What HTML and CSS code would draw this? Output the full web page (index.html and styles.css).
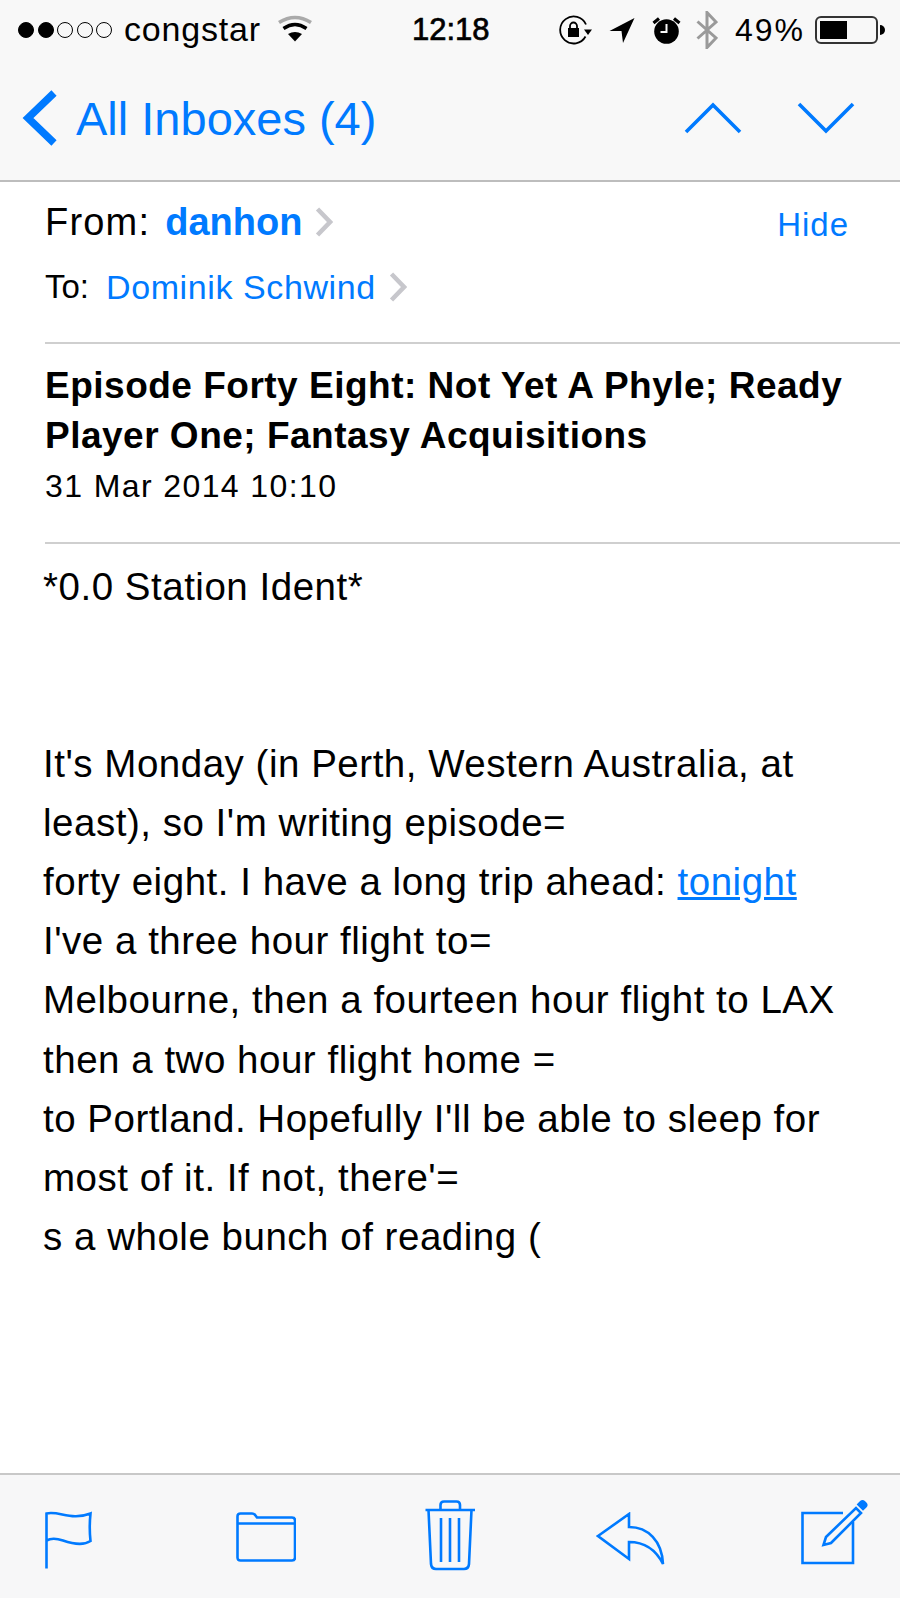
FILE: index.html
```html
<!DOCTYPE html>
<html lang="en">
<head>
<meta charset="utf-8">
<title>Mail</title>
<link rel="stylesheet" href="styles.css">
</head>
<body>
<div class="phone">
  <header class="top">
    <div class="status">
      <div class="status-left">
        <div class="dots"><i class="dot on"></i><i class="dot on"></i><i class="dot"></i><i class="dot"></i><i class="dot"></i></div>
        <span class="carrier">congstar</span>
        <svg class="wifi" width="34" height="27" viewBox="0 0 34 27">
          <path d="M1 7.500Q17 -2.500 33 7.500" fill="none" stroke="#aaa" stroke-width="3.600"/>
          <path d="M5.500 13.500Q17 5.500 28.500 13.500" fill="none" stroke="#000" stroke-width="3.400"/>
          <path d="M10 19Q17 15 24 19L17 26.500Z" fill="#000"/>
        </svg>
      </div>
      <div class="time">12:18</div>
      <div class="status-right">
        <svg class="st-lock" width="33" height="30" viewBox="0 0 33 30">
          <path d="M27 9.500A13.500 13.500 0 1 0 26.500 21.500" fill="none" stroke="#000" stroke-width="1.800"/>
          <path d="M25 14.500H33L29 20Z" fill="#000"/>
          <rect x="9" y="13" width="11" height="9" fill="#000"/>
          <path d="M11 13V11A3.500 3.500 0 0 1 18 11V13" fill="none" stroke="#000" stroke-width="1.800"/>
        </svg>
        <svg class="st-loc" width="26" height="26" viewBox="0 0 26 26"><path d="M25.500 1L0.500 14H12.500L14 26Z" fill="#000"/></svg>
        <svg class="st-alarm" width="29" height="27" viewBox="0 0 29 27">
          <circle cx="14.500" cy="14.500" r="12.300" fill="#000"/>
          <path d="M14.500 7V15H8.500" fill="none" stroke="#f8f8f8" stroke-width="2"/>
          <path d="M1.500 6L7 1.500M27.500 6L22 1.500" fill="none" stroke="#000" stroke-width="3.200"/>
        </svg>
        <svg class="st-bt" width="22" height="38" viewBox="0 0 22 38">
          <path d="M1.500 10.500L20 27L11 36.500V1.500L20 11L1.500 27.500" fill="none" stroke="#9a9a9a" stroke-width="3"/>
        </svg>
        <span class="pct">49%</span>
        <div class="battery"><div class="battery-fill"></div></div>
        <i class="battery-nub"></i>
      </div>
    </div>
    <nav class="nav">
      <div class="back">
        <svg class="back-icon" width="38" height="60" viewBox="0 0 38 60"><path d="M34 5L8 30L34 55" fill="none" stroke="#007aff" stroke-width="7.500"/></svg>
        <span>All Inboxes (4)</span>
      </div>
      <div class="arrows">
        <svg width="58" height="32" viewBox="0 0 58 32"><path d="M2 30L29 3L56 30" fill="none" stroke="#007aff" stroke-width="3.600"/></svg>
        <svg width="58" height="32" viewBox="0 0 58 32"><path d="M2 2L29 29L56 2" fill="none" stroke="#007aff" stroke-width="3.600"/></svg>
      </div>
    </nav>
  </header>

  <main class="mail">
    <section class="addr">
      <div class="from-row">
        <div class="from">
          <span class="label">From:</span>
          <strong class="sender">danhon</strong>
          <svg class="disc" width="18" height="30" viewBox="0 0 18 30"><path d="M2.500 2L15 15L2.500 28" fill="none" stroke="#c7c7cc" stroke-width="4.500"/></svg>
        </div>
        <a class="hide">Hide</a>
      </div>
      <div class="to">
        <span class="label-small">To:</span>
        <span class="recipient">Dominik Schwind</span>
        <svg class="disc" width="18" height="30" viewBox="0 0 18 30"><path d="M2.500 2L15 15L2.500 28" fill="none" stroke="#c7c7cc" stroke-width="4.500"/></svg>
      </div>
    </section>
    <section class="subject">
      <h1>Episode Forty Eight: Not Yet A Phyle; Ready Player One; Fantasy Acquisitions</h1>
      <div class="date">31 Mar 2014 10:10</div>
    </section>
    <article class="body">
      <p class="ident">*0.0 Station Ident*</p>
      <p>It's Monday (in Perth, Western Australia, at<br>least), so I'm writing episode=<br>forty eight. I have a long trip ahead: <a class="link">tonight</a><br>I've a three hour flight to=<br>Melbourne, then a fourteen hour flight to LAX<br>then a two hour flight home =<br>to Portland. Hopefully I'll be able to sleep for<br>most of it. If not, there'=<br>s a whole bunch of reading (</p>
    </article>
  </main>

  <footer class="tools">
    <svg class="t-flag" width="48" height="58" viewBox="0 0 48 58" fill="none" stroke="#007aff" stroke-width="2.600">
      <path d="M1.500 57.500V2.500C14 -0.500 26 10 45.500 2.500C44.500 12 44.500 21 45.500 30C38 35 28 33 18 29.500C12 27.500 6 27 1.500 29.500"/>
    </svg>
    <svg class="t-folder" width="60" height="50" viewBox="0 0 60 50" fill="none" stroke="#007aff" stroke-width="2.600">
      <path d="M1.500 4.500Q1.500 1.500 4.500 1.500H16Q18 1.500 19.500 3.500L21 5.500H56Q59 5.500 59 8.500V45.500Q59 48.500 56 48.500H4.500Q1.500 48.500 1.500 45.500Z"/>
      <path d="M1.500 11.500H59"/>
    </svg>
    <svg class="t-trash" width="52" height="72" viewBox="0 0 52 72" fill="none" stroke="#007aff" stroke-width="2.600">
      <path d="M0.500 11H50M3.500 11L6 65Q6.500 70 11 70H39Q43.500 70 44 65L46.500 11"/>
      <path d="M15.500 11V6Q15.500 2.500 19 2.500H31.500Q35 2.500 35 6V11"/>
      <path d="M16 19V63M25 19V63M34 19V63"/>
    </svg>
    <svg class="t-reply" width="70" height="54" viewBox="0 0 70 54" fill="none" stroke="#007aff" stroke-width="2.600">
      <path d="M2 24L33 2V15C52 15 66 29 67 52C60 38 50 30 33 30V47Z"/>
    </svg>
    <svg class="t-compose" width="68" height="68" viewBox="0 0 68 68" fill="none" stroke="#007aff" stroke-width="2.600">
      <path d="M43 14H2.500V64H53V23"/>
      <path d="M26 38L56 9L61 14L31 44L23.500 46Z"/>
      <path d="M58.500 5.500L61 3Q62.500 1.500 64 3L65.500 4.500Q67 6 65.500 7.500L63 10Z" fill="#007aff"/>
    </svg>
  </footer>
</div>
</body>
</html>
```
FILE: styles.css
```css
* { box-sizing: border-box; }
html, body { margin: 0; padding: 0; }
body { width: 900px; height: 1598px; overflow: hidden; background: #fff; font-family: "Liberation Sans", Arial, sans-serif; color: #000; }
.phone { width: 900px; height: 1598px; display: flex; flex-direction: column; }

.top { height: 182px; flex: none; background: #f8f8f8; border-bottom: 2px solid #bdbdbd; }
.status { height: 60px; display: flex; align-items: center; padding: 0 15px 0 18px; }
.status-left { display: flex; align-items: center; flex: 0 0 394px; }
.dots { display: flex; gap: 3.500px; }
.dot { width: 16px; height: 16px; border-radius: 50%; border: 1.500px solid #000; display: block; }
.dot.on { background: #000; }
.carrier { font-size: 34px; letter-spacing: 0.800px; margin-left: 12px; margin-top: -1px; }
.wifi { margin-left: 17px; margin-top: -3px; }
.time { font-size: 31px; -webkit-text-stroke: 0.700px #000; }
.status-right { display: flex; align-items: center; margin-left: auto; }
.st-lock { margin-right: 17px; }
.st-loc { margin-right: 17px; }
.st-alarm { margin-right: 15px; }
.st-bt { margin-right: 17px; }
.pct { font-size: 32px; letter-spacing: 2px; margin-right: 10px; }
.battery { width: 63px; height: 28px; border: 2px solid #333; border-radius: 6px; padding: 3px; }
.battery-fill { width: 27px; height: 100%; background: #000; }
.battery-nub { display: block; width: 5px; height: 10px; background: #000; border-radius: 0 5px 5px 0; margin-left: 2px; }

.nav { height: 120px; display: flex; align-items: center; justify-content: space-between; padding: 0 45px 4px 20px; }
.back { display: flex; align-items: center; color: #007aff; font-size: 47px; }
.back-icon { margin-right: 18px; }
.arrows { display: flex; gap: 55px; }

.mail { flex: 1; min-height: 0; }
.addr { margin-left: 45px; height: 162px; border-bottom: 2px solid #cfcfcf; }
.from-row { display: flex; justify-content: space-between; align-items: center; height: 80px; padding-right: 51px; }
.from { display: flex; align-items: center; }
.label { font-size: 38px; letter-spacing: 1.200px; }
.sender { font-size: 38px; color: #007aff; margin-left: 15px; margin-right: 13px; }
.hide { font-size: 33px; letter-spacing: 1px; color: #007aff; margin-top: 6px; }
.to { display: flex; align-items: center; height: 44px; margin-top: 3px; }
.label-small { font-size: 33px; }
.recipient { font-size: 34px; letter-spacing: 0.600px; color: #007aff; margin-left: 17px; margin-right: 13px; }

.subject { margin-left: 45px; height: 200px; padding-top: 17px; border-bottom: 2px solid #cfcfcf; }
.subject h1 { margin: 0; font-size: 37px; font-weight: 700; letter-spacing: 0.500px; line-height: 50px; width: 830px; }
.date { font-size: 32px; letter-spacing: 1.400px; line-height: 48px; margin-top: 1px; }

.body { padding: 13px 40px 0 43px; font-size: 38.500px; letter-spacing: 0.520px; line-height: 59.200px; }
.body p { margin: 0; }
.ident { margin-bottom: 117.400px !important; }
.link { color: #007aff; text-decoration: underline; }

.tools { height: 125px; flex: none; background: #f7f7f8; border-top: 2px solid #c8c8c8; display: flex; align-items: center; padding: 0 0 0 45px; }
.t-flag { margin-top: 6px; }
.t-folder { margin-left: 143px; }
.t-trash { margin-left: 129px; margin-top: -3px; }
.t-reply { margin-left: 119px; margin-top: 4px; }
.t-compose { margin-left: 134px; margin-top: -8px; }
```
